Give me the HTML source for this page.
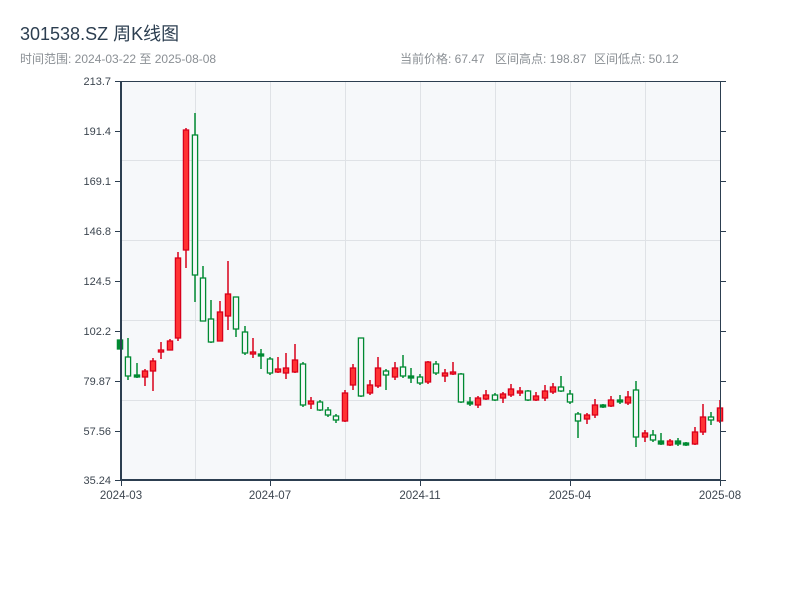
<!DOCTYPE html>
<html><head><meta charset="utf-8"><style>
body{margin:0;width:800px;height:600px;background:#fff;overflow:hidden;font-family:"Liberation Sans","Noto Sans CJK SC",sans-serif}
</style></head><body>
<svg width="800" height="600" xmlns="http://www.w3.org/2000/svg" font-family="Liberation Sans, Noto Sans CJK SC, sans-serif">
<text x="20" y="40" font-size="18" fill="#2c3e50">301538.SZ 周K线图</text>
<text x="20" y="63" font-size="12" fill="#8a8f94">时间范围: 2024-03-22 至 2025-08-08</text>
<text x="400" y="63" font-size="12" fill="#8a8f94">当前价格: 67.47</text>
<text x="495" y="63" font-size="12" fill="#8a8f94">区间高点: 198.87</text>
<text x="594" y="63" font-size="12" fill="#8a8f94">区间低点: 50.12</text>
<rect x="121" y="81" width="599" height="399" fill="#f6f8fa"/>
<g stroke="#dfe2e6" stroke-width="1">
<line x1="195.5" y1="81" x2="195.5" y2="480"/><line x1="270.5" y1="81" x2="270.5" y2="480"/><line x1="345.5" y1="81" x2="345.5" y2="480"/><line x1="420.5" y1="81" x2="420.5" y2="480"/><line x1="495.5" y1="81" x2="495.5" y2="480"/><line x1="570.5" y1="81" x2="570.5" y2="480"/><line x1="645.5" y1="81" x2="645.5" y2="480"/>
<line x1="121" y1="160.5" x2="720" y2="160.5"/><line x1="121" y1="240.5" x2="720" y2="240.5"/><line x1="121" y1="320.5" x2="720" y2="320.5"/><line x1="121" y1="400.5" x2="720" y2="400.5"/>
</g>
<g id="c"></g>
<g stroke="#2c3e50">
<line x1="121" y1="81" x2="121" y2="481" stroke-width="2"/>
<line x1="120" y1="480" x2="721" y2="480" stroke-width="2"/>
<line x1="121" y1="81.5" x2="720" y2="81.5" stroke-width="1"/>
<line x1="720.5" y1="81" x2="720.5" y2="480" stroke-width="1"/>
<g stroke-width="1">
<line x1="115" y1="81.5" x2="121" y2="81.5"/><line x1="115" y1="131.5" x2="121" y2="131.5"/><line x1="115" y1="181.5" x2="121" y2="181.5"/><line x1="115" y1="231.5" x2="121" y2="231.5"/><line x1="115" y1="281.5" x2="121" y2="281.5"/><line x1="115" y1="331.5" x2="121" y2="331.5"/><line x1="115" y1="381.5" x2="121" y2="381.5"/><line x1="115" y1="431.5" x2="121" y2="431.5"/><line x1="115" y1="480.5" x2="121" y2="480.5"/>
<line x1="720" y1="81.5" x2="726" y2="81.5"/><line x1="720" y1="131.5" x2="726" y2="131.5"/><line x1="720" y1="181.5" x2="726" y2="181.5"/><line x1="720" y1="231.5" x2="726" y2="231.5"/><line x1="720" y1="281.5" x2="726" y2="281.5"/><line x1="720" y1="331.5" x2="726" y2="331.5"/><line x1="720" y1="381.5" x2="726" y2="381.5"/><line x1="720" y1="431.5" x2="726" y2="431.5"/><line x1="720" y1="480.5" x2="726" y2="480.5"/>
<line x1="121.5" y1="480" x2="121.5" y2="486"/><line x1="270.5" y1="480" x2="270.5" y2="486"/><line x1="420.5" y1="480" x2="420.5" y2="486"/><line x1="570.5" y1="480" x2="570.5" y2="486"/><line x1="720.5" y1="480" x2="720.5" y2="486"/>
</g></g>
<g font-size="11" fill="#3d4650" text-anchor="end">
<text x="111" y="85">213.7</text><text x="111" y="135">191.4</text><text x="111" y="185">169.1</text><text x="111" y="235">146.8</text><text x="111" y="285">124.5</text><text x="111" y="335">102.2</text><text x="111" y="385">79.87</text><text x="111" y="435">57.56</text><text x="111" y="484">35.24</text>
</g>
<g font-size="11.5" fill="#3d4650" text-anchor="middle">
<text x="121" y="499">2024-03</text><text x="270" y="499">2024-07</text><text x="420" y="499">2024-11</text><text x="570" y="499">2025-04</text><text x="720" y="499">2025-08</text>
</g>
</svg>
<script>
var d=[[120,340,349,340,349,'g',1],[128,357,376,338,380,'g'],[137,375,377,363,378,'g',1],[145,371,377,369,386,'r'],[153,361,371,358,391,'r'],[161,350,352,342,359,'r'],[170,341,350,339,350,'r'],[178,258,338,252,341,'r'],[186,130,250,128,268,'r'],[195,135,275,113,302,'g'],[203,278,321,266,321,'g'],[211,319,342,300,343,'g'],[220,312,341,301,329,'r'],[228,294,316,261,330,'r'],[236,297,329,297,337,'g'],[245,332,353,326,355,'g'],[253,352,354,338,358,'r'],[261,354,356,349,369,'g',1],[270,359,373,357,375,'g'],[278,369,372,357,373,'r'],[286,368,373,353,379,'r'],[295,360,372,344,373,'r'],[303,364,405,362,407,'g'],[311,401,404,397,409,'r'],[320,402,410,400,411,'g'],[328,410,415,407,417,'g'],[336,416,420,414,423,'g'],[345,393,421,390,422,'r'],[353,368,385,364,390,'r'],[361,338,396,338,397,'g'],[370,385,393,380,395,'r'],[378,368,386,357,388,'r'],[386,371,375,369,390,'g'],[395,368,377,362,380,'r'],[403,367,376,355,378,'g'],[411,376,378,368,383,'g',1],[420,377,383,374,385,'g'],[428,362,382,361,384,'r'],[436,364,373,361,375,'g'],[445,373,376,369,382,'r'],[453,372,374,362,375,'r'],[461,374,402,373,403,'g'],[470,402,404,397,406,'g',1],[478,398,405,396,408,'r'],[486,395,399,390,400,'r'],[495,395,400,393,401,'g'],[503,394,398,392,403,'r'],[511,389,395,384,397,'r'],[520,391,393,387,396,'r'],[528,391,400,390,401,'g'],[536,396,400,392,401,'r'],[545,391,398,385,401,'r'],[553,387,392,383,394,'r'],[561,387,391,376,392,'g'],[570,394,402,390,404,'g'],[578,414,421,412,438,'g'],[587,415,419,413,424,'r'],[595,405,415,399,418,'r'],[603,405,407,404,408,'g',1],[611,400,406,396,407,'r'],[620,400,402,395,404,'g',1],[628,397,403,391,405,'r'],[636,390,437,381,447,'g'],[645,433,437,430,442,'r'],[653,435,440,430,442,'g'],[661,441,444,433,445,'g',1],[670,441,445,439,446,'r'],[678,441,444,438,446,'g',1],[686,443,445,442,446,'g',1],[695,432,444,427,445,'r'],[703,417,432,404,435,'r'],[711,417,420,412,425,'g'],[720,408,421,400,423,'r']];
var s='';d.forEach(function(c){var x=c[0],col=c[5]=='r'?'#d9001b':'#008a32',fill=c[5]=='r'?'#ff3333':(c[6]?'#008a32':'none');
s+='<line x1="'+x+'" y1="'+c[3]+'" x2="'+x+'" y2="'+c[4]+'" stroke="'+col+'" stroke-width="1.5"/>';
var h=Math.max(c[2]-c[1],1.5);s+='<rect x="'+(x-2.6)+'" y="'+c[1]+'" width="5.2" height="'+h+'" fill="'+(c[5]=='g'&&!c[6]?'#f6f8fa':fill)+'" stroke="'+col+'" stroke-width="1.3"/>';});
document.getElementById('c').innerHTML=s;
</script>
</body></html>
